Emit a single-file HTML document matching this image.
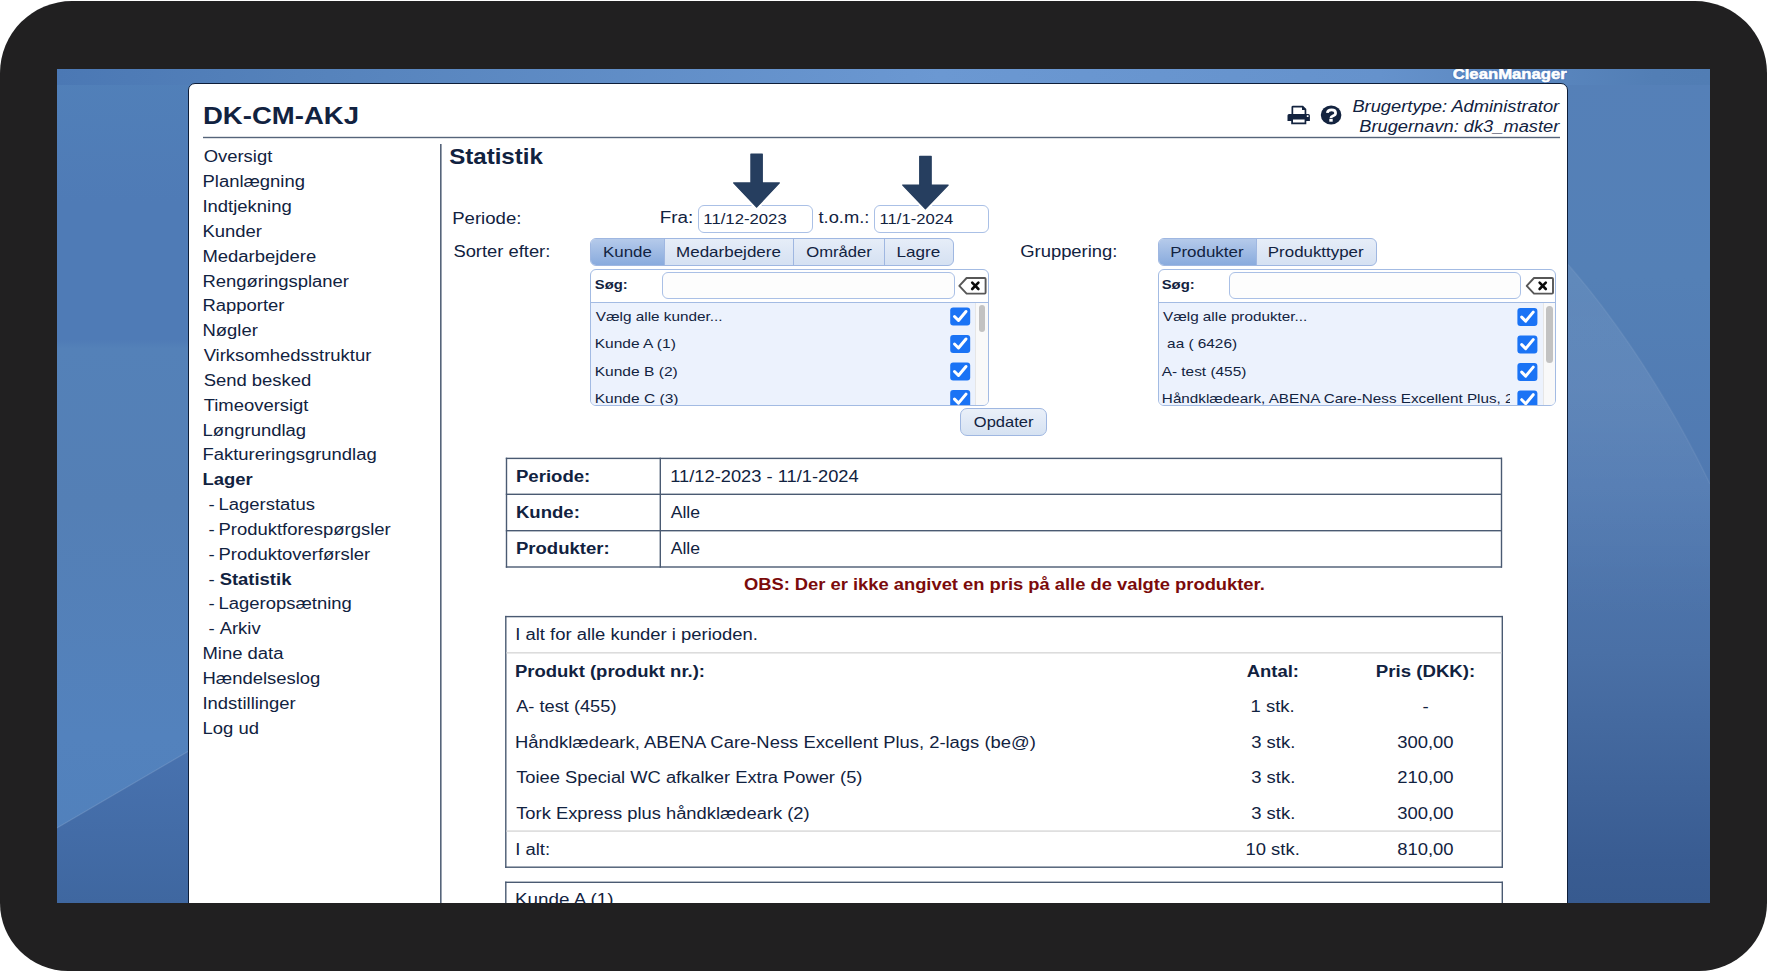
<!DOCTYPE html>
<html><head><meta charset="utf-8">
<style>
html,body{margin:0;padding:0;width:1767px;height:971px;overflow:hidden;background:#fff;font-family:"Liberation Sans",sans-serif;}
.a{position:absolute;box-sizing:border-box;}
#frame{left:0;top:1px;width:1767px;height:970px;background:#212021;border-radius:72px 72px 68px 68px;}
#scr{left:0;top:0;width:1767px;height:971px;clip-path:inset(69px 57px 68px 57px);}
#wall{}
#panel{left:188px;top:83px;width:1380px;height:900px;background:#fff;border:1.5px solid #0d1d38;border-radius:7px 7px 0 0;}
.hl{background:#4d5f7b;}
.inp{border:1px solid #aac0e6;border-radius:6px;background:#fff;}
.tabs{border:1px solid #9fb7e1;border-radius:6px;background:linear-gradient(180deg,#e6edf8,#d5e1f2);overflow:hidden;}
.act{background:linear-gradient(180deg,#b5caea,#89abdd);}
.div{background:#9fb7e1;width:1px;}
.list{border:1px solid #a3bbe3;border-radius:6px;background:#fff;overflow:hidden;}
.rows{background:#ecf2fd;}
.tbl{border:1.5px solid #3f5069;}
.btn{border:1px solid #9fb7e1;border-radius:7px;background:linear-gradient(180deg,#eaf0f9,#d6e2f2);}
</style></head><body>
<div id="frame" class="a"></div>
<div id="scr" class="a">
  <svg id="wall" class="a" style="left:57px;top:69px" width="1653" height="834" viewBox="57 69 1653 834">
    <defs>
      <linearGradient id="gL" x1="0" y1="69" x2="0" y2="903" gradientUnits="userSpaceOnUse">
        <stop offset="0" stop-color="#5180b9"/><stop offset="0.16" stop-color="#4f7bb6"/><stop offset="0.325" stop-color="#4f7bb6"/>
        <stop offset="0.335" stop-color="#5481b8"/><stop offset="0.52" stop-color="#547fb5"/><stop offset="0.8" stop-color="#5382bd"/><stop offset="1" stop-color="#5080bb"/>
      </linearGradient>
      <linearGradient id="gLb" x1="0" y1="750" x2="0" y2="903" gradientUnits="userSpaceOnUse">
        <stop offset="0" stop-color="#4872af"/><stop offset="1" stop-color="#3f67a0"/>
      </linearGradient>
      <linearGradient id="gR" x1="0" y1="69" x2="0" y2="903" gradientUnits="userSpaceOnUse">
        <stop offset="0" stop-color="#5580b8"/><stop offset="0.25" stop-color="#5480b6"/><stop offset="0.5" stop-color="#5079b1"/>
        <stop offset="0.7" stop-color="#4a70a6"/><stop offset="0.95" stop-color="#395c92"/><stop offset="1" stop-color="#375a8f"/>
      </linearGradient>
      <linearGradient id="gRs" x1="0" y1="263" x2="0" y2="620" gradientUnits="userSpaceOnUse">
        <stop offset="0" stop-color="#fff" stop-opacity="0.07"/><stop offset="0.35" stop-color="#fff" stop-opacity="0.08"/><stop offset="1" stop-color="#fff" stop-opacity="0"/>
      </linearGradient>
      <linearGradient id="gT" x1="57" y1="0" x2="1710" y2="0" gradientUnits="userSpaceOnUse">
        <stop offset="0" stop-color="#4b78b4"/><stop offset="0.147" stop-color="#5582bb"/><stop offset="0.534" stop-color="#6b98d2"/>
        <stop offset="0.8" stop-color="#6592cc"/><stop offset="0.966" stop-color="#527eb5"/><stop offset="1" stop-color="#517db4"/>
      </linearGradient>
    </defs>
    <rect x="57" y="69" width="700" height="834" fill="url(#gL)"/>
    <path d="M57 828 L300 686 L300 903 L57 903 Z" fill="url(#gLb)"/>
    <path d="M57 828 L300 686" stroke="#fff" stroke-opacity="0.12" stroke-width="1.2"/>
    <rect x="1000" y="69" width="710" height="834" fill="url(#gR)"/>
    <path d="M1500 200 C1580 260 1660 380 1710 484 L1710 700 L1500 700 Z" fill="url(#gRs)"/>
    <path d="M1500 200 C1580 260 1660 380 1710 484" fill="none" stroke="#fff" stroke-opacity="0.06" stroke-width="1.5"/>
    <rect x="57" y="69" width="1653" height="16" fill="url(#gT)"/>
  </svg>
  <div id="panel" class="a"></div>
  <!-- header line -->
    <!-- nav separator -->
  
  <!-- inputs -->
  <div class="a inp" style="left:698px;top:205px;width:115px;height:28px"></div>
  <div class="a inp" style="left:874px;top:205px;width:115px;height:28px"></div>

  <!-- tabs 1 -->
  <div class="a tabs" style="left:590px;top:238px;width:364px;height:28px">
    <div class="a act" style="left:0;top:0;width:73.5px;height:26px"></div>
    <div class="a div" style="left:73px;top:0;height:26px"></div>
    <div class="a div" style="left:202px;top:0;height:26px"></div>
    <div class="a div" style="left:293px;top:0;height:26px"></div>
  </div>
  <!-- tabs 2 -->
  <div class="a tabs" style="left:1158px;top:238px;width:219px;height:28px">
    <div class="a act" style="left:0;top:0;width:98px;height:26px"></div>
    <div class="a div" style="left:97px;top:0;height:26px"></div>
  </div>

  <!-- list 1 -->
  <div class="a list" style="left:590px;top:269px;width:399px;height:137px">
    <div class="a rows" style="left:0;top:32px;width:397px;height:103px;border-top:1px solid #a3bbe3"></div>
    <div class="a" style="left:384px;top:33px;width:13px;height:102px;background:#f9f9f9;border-left:1px solid #e6e6e6"></div>
    <div class="a" style="left:387.5px;top:35px;width:6.5px;height:26.5px;background:#c2c2c2;border-radius:4px"></div>
  </div>
  <div class="a inp" style="left:662px;top:272px;width:293px;height:27px;background:#fdfdfd"></div>
  <!-- list 2 -->
  <div class="a list" style="left:1158px;top:269px;width:398px;height:137px">
    <div class="a rows" style="left:0;top:32px;width:396px;height:103px;border-top:1px solid #a3bbe3"></div>
    <div class="a" style="left:383.5px;top:33px;width:13px;height:102px;background:#f9f9f9;border-left:1px solid #e6e6e6"></div>
    <div class="a" style="left:387px;top:35.5px;width:6.5px;height:57.5px;background:#c2c2c2;border-radius:4px"></div>
  </div>
  <div class="a inp" style="left:1229px;top:272px;width:292px;height:27px;background:#fdfdfd"></div>

  <!-- button -->
  <div class="a btn" style="left:960px;top:408px;width:87px;height:28px"></div>

  <svg class="a" style="left:0;top:0" width="1767" height="971" viewBox="0 0 1767 971">
    <defs>
      <clipPath id="l1"><rect x="591" y="303" width="384" height="102"/></clipPath>
      <clipPath id="l2"><rect x="1159" y="303" width="383" height="102"/></clipPath>
      <clipPath id="l2t"><rect x="1159" y="303" width="351" height="102"/></clipPath>
    </defs>

    <!-- lines -->
    <g fill="#55647a">
      <rect x="203" y="136.8" width="1357" height="1.4"/>
      <rect x="440" y="144" width="1.6" height="800"/>
    </g>
    <g fill="#4a5a72">
      <!-- info table -->
      <rect x="505.8" y="457.7" width="996.2" height="1.4"/>
      <rect x="505.8" y="493.6" width="996.2" height="1.4"/>
      <rect x="505.8" y="530" width="996.2" height="1.4"/>
      <rect x="505.8" y="566.3" width="996.2" height="1.4"/>
      <rect x="505.8" y="457.7" width="1.4" height="110"/>
      <rect x="1500.8" y="457.7" width="1.4" height="110"/>
      <rect x="659.6" y="457.7" width="1.4" height="110"/>
      <!-- summary -->
      <rect x="505.1" y="615.9" width="997.7" height="1.4"/>
      <rect x="505.1" y="866.5" width="997.7" height="1.4"/>
      <rect x="505.1" y="615.9" width="1.4" height="252"/>
      <rect x="1501.6" y="615.9" width="1.4" height="252"/>
      <rect x="505.1" y="881.6" width="997.7" height="1.4"/>
      <rect x="505.1" y="881.6" width="1.4" height="60"/>
      <rect x="1501.6" y="881.6" width="1.4" height="60"/>
    </g>
    <g fill="#dcdcdc">
      <rect x="506.5" y="652" width="995" height="1.6"/>
      <rect x="506.5" y="830.3" width="995" height="1.6"/>
    </g>
    <!-- arrows -->
    <g stroke-linejoin="round">
      <path d="M750.9 154.1 H762.3 V182.9 H779.4 L756.6 207.2 L733.6 182.9 H750.9 Z" fill="none" stroke="#fff" stroke-width="5"/>
      <path d="M919.7 156.3 H931.2 V185 H948.2 L925.4 208.9 L902.7 185 H919.7 Z" fill="none" stroke="#fff" stroke-width="5"/>
      <path d="M750.9 154.1 H762.3 V182.9 H779.4 L756.6 207.2 L733.6 182.9 H750.9 Z" fill="#263e5f" stroke="#263e5f" stroke-width="1.2"/>
      <path d="M919.7 156.3 H931.2 V185 H948.2 L925.4 208.9 L902.7 185 H919.7 Z" fill="#263e5f" stroke="#263e5f" stroke-width="1.2"/>
    </g>
    <!-- clear icons -->
    <g fill="none" stroke-linejoin="round" stroke-linecap="round">
      <path d="M966.6 278 H984.6 Q985.6 278 985.6 279 V292.6 Q985.6 293.6 984.6 293.6 H966.6 L959.3 285.8 Z" stroke="#575757" stroke-width="1.9"/>
      <path d="M972.2 282.6 L978.4 289 M978.4 282.6 L972.2 289" stroke="#0a0a0a" stroke-width="2.6"/>
      <path d="M1534 278 H1552 Q1553 278 1553 279 V292.6 Q1553 293.6 1552 293.6 H1534 L1526.7 285.8 Z" stroke="#575757" stroke-width="1.9"/>
      <path d="M1539.6 282.6 L1545.8 289 M1545.8 282.6 L1539.6 289" stroke="#0a0a0a" stroke-width="2.6"/>
    </g>
    <!-- checkboxes -->
    <g clip-path="url(#l1)">
      <g id="cb"><rect x="950.2" y="307.4" width="20" height="18" rx="3" fill="#1a73f5"/><path d="M954.5 316.5 L958.5 320.5 L966 311.5" fill="none" stroke="#fff" stroke-width="3" stroke-linecap="round" stroke-linejoin="round"/></g>
      <use href="#cb" y="27.5"/><use href="#cb" y="55"/><use href="#cb" y="82.6"/>
    </g>
    <g clip-path="url(#l2)">
      <use href="#cb" x="567.2" y="0.6"/><use href="#cb" x="567.2" y="28.1"/><use href="#cb" x="567.2" y="55.6"/><use href="#cb" x="567.2" y="83.2"/>
    </g>
    <!-- icons -->
    <g fill="#13233f">
      <path d="M1291.5 115 V107 Q1291.5 105.7 1293 105.7 H1303 L1306.3 109 V115 H1304.6 V110 H1302 V107.4 H1293.2 V115 Z"/>
      <path d="M1287.5 115.5 Q1287.5 114 1289 114 H1308.4 Q1309.9 114 1309.9 115.5 V121 H1306.3 V124.3 H1291.2 V121 H1287.5 Z M1293 119.6 V122.6 H1304.6 V119.6 Z M1306.8 115.2 V117 H1308.5 V115.2 Z" fill-rule="evenodd"/>
      <ellipse cx="1331.1" cy="115" rx="10.3" ry="9.4"/>
    </g>
    <path d="M1327.3 112.9 Q1327.8 109.9 1331.6 109.9 Q1335.6 109.9 1335.6 112.9 Q1335.6 114.8 1333.3 115.8 Q1330.9 116.8 1330.9 118" fill="none" stroke="#fff" stroke-width="2.7"/>
    <rect x="1329.3" y="118.8" width="3.4" height="2.9" fill="#fff"/>
<text x="202.95" y="124.10" font-size="24" textLength="156.09" lengthAdjust="spacingAndGlyphs" fill="#112240" style="font-weight:bold;" xml:space="preserve">DK-CM-AKJ</text>
<text x="1352.40" y="111.70" font-size="16" textLength="206.83" lengthAdjust="spacingAndGlyphs" fill="#112240" style="font-style:italic;" xml:space="preserve">Brugertype: Administrator</text>
<text x="1359.30" y="131.80" font-size="16" textLength="199.93" lengthAdjust="spacingAndGlyphs" fill="#112240" style="font-style:italic;" xml:space="preserve">Brugernavn: dk3_master</text>
<text x="1452.70" y="78.80" font-size="14.5" textLength="114.09" lengthAdjust="spacingAndGlyphs" fill="#3f70b8" style="font-weight:bold;" stroke="#3f70b8" stroke-width="2.2" opacity="0.6" stroke-linejoin="round" xml:space="preserve">CleanManager</text>
<text x="1452.70" y="78.80" font-size="14.5" textLength="114.09" lengthAdjust="spacingAndGlyphs" fill="#ffffff" style="font-weight:bold;" stroke="#ffffff" stroke-width="0.5" xml:space="preserve">CleanManager</text>
<text x="203.65" y="162.30" font-size="16" textLength="68.62" lengthAdjust="spacingAndGlyphs" fill="#112240" style="" xml:space="preserve">Oversigt</text>
<text x="202.50" y="187.14" font-size="16" textLength="102.47" lengthAdjust="spacingAndGlyphs" fill="#112240" style="" xml:space="preserve">Planlægning</text>
<text x="202.50" y="211.98" font-size="16" textLength="89.15" lengthAdjust="spacingAndGlyphs" fill="#112240" style="" xml:space="preserve">Indtjekning</text>
<text x="202.50" y="236.82" font-size="16" textLength="59.44" lengthAdjust="spacingAndGlyphs" fill="#112240" style="" xml:space="preserve">Kunder</text>
<text x="202.50" y="261.66" font-size="16" textLength="113.73" lengthAdjust="spacingAndGlyphs" fill="#112240" style="" xml:space="preserve">Medarbejdere</text>
<text x="202.50" y="286.50" font-size="16" textLength="146.51" lengthAdjust="spacingAndGlyphs" fill="#112240" style="" xml:space="preserve">Rengøringsplaner</text>
<text x="202.50" y="311.34" font-size="16" textLength="81.96" lengthAdjust="spacingAndGlyphs" fill="#112240" style="" xml:space="preserve">Rapporter</text>
<text x="202.50" y="336.18" font-size="16" textLength="55.30" lengthAdjust="spacingAndGlyphs" fill="#112240" style="" xml:space="preserve">Nøgler</text>
<text x="203.65" y="361.02" font-size="16" textLength="167.65" lengthAdjust="spacingAndGlyphs" fill="#112240" style="" xml:space="preserve">Virksomhedsstruktur</text>
<text x="203.65" y="385.86" font-size="16" textLength="107.60" lengthAdjust="spacingAndGlyphs" fill="#112240" style="" xml:space="preserve">Send besked</text>
<text x="203.65" y="410.70" font-size="16" textLength="104.81" lengthAdjust="spacingAndGlyphs" fill="#112240" style="" xml:space="preserve">Timeoversigt</text>
<text x="202.50" y="435.54" font-size="16" textLength="103.50" lengthAdjust="spacingAndGlyphs" fill="#112240" style="" xml:space="preserve">Løngrundlag</text>
<text x="202.50" y="460.38" font-size="16" textLength="174.18" lengthAdjust="spacingAndGlyphs" fill="#112240" style="" xml:space="preserve">Faktureringsgrundlag</text>
<text x="202.50" y="485.22" font-size="16" textLength="50.19" lengthAdjust="spacingAndGlyphs" fill="#112240" style="font-weight:bold;" xml:space="preserve">Lager</text>
<text x="208.40" y="510.06" font-size="16" textLength="6.14" lengthAdjust="spacingAndGlyphs" fill="#112240" style="" xml:space="preserve">-</text>
<text x="218.55" y="510.06" font-size="16" textLength="96.32" lengthAdjust="spacingAndGlyphs" fill="#112240" style="" xml:space="preserve">Lagerstatus</text>
<text x="208.40" y="534.90" font-size="16" textLength="6.14" lengthAdjust="spacingAndGlyphs" fill="#112240" style="" xml:space="preserve">-</text>
<text x="218.55" y="534.90" font-size="16" textLength="172.10" lengthAdjust="spacingAndGlyphs" fill="#112240" style="" xml:space="preserve">Produktforespørgsler</text>
<text x="208.40" y="559.74" font-size="16" textLength="6.14" lengthAdjust="spacingAndGlyphs" fill="#112240" style="" xml:space="preserve">-</text>
<text x="218.55" y="559.74" font-size="16" textLength="151.60" lengthAdjust="spacingAndGlyphs" fill="#112240" style="" xml:space="preserve">Produktoverførsler</text>
<text x="208.40" y="584.58" font-size="16" textLength="6.14" lengthAdjust="spacingAndGlyphs" fill="#112240" style="" xml:space="preserve">-</text>
<text x="219.70" y="584.58" font-size="16" textLength="71.70" lengthAdjust="spacingAndGlyphs" fill="#112240" style="font-weight:bold;" xml:space="preserve">Statistik</text>
<text x="208.40" y="609.42" font-size="16" textLength="6.14" lengthAdjust="spacingAndGlyphs" fill="#112240" style="" xml:space="preserve">-</text>
<text x="218.55" y="609.42" font-size="16" textLength="133.22" lengthAdjust="spacingAndGlyphs" fill="#112240" style="" xml:space="preserve">Lageropsætning</text>
<text x="208.40" y="634.26" font-size="16" textLength="6.14" lengthAdjust="spacingAndGlyphs" fill="#112240" style="" xml:space="preserve">-</text>
<text x="219.70" y="634.26" font-size="16" textLength="40.96" lengthAdjust="spacingAndGlyphs" fill="#112240" style="" xml:space="preserve">Arkiv</text>
<text x="202.50" y="659.10" font-size="16" textLength="80.95" lengthAdjust="spacingAndGlyphs" fill="#112240" style="" xml:space="preserve">Mine data</text>
<text x="202.50" y="683.94" font-size="16" textLength="117.83" lengthAdjust="spacingAndGlyphs" fill="#112240" style="" xml:space="preserve">Hændelseslog</text>
<text x="202.50" y="708.78" font-size="16" textLength="93.23" lengthAdjust="spacingAndGlyphs" fill="#112240" style="" xml:space="preserve">Indstillinger</text>
<text x="202.50" y="733.62" font-size="16" textLength="56.38" lengthAdjust="spacingAndGlyphs" fill="#112240" style="" xml:space="preserve">Log ud</text>
<text x="449.20" y="164.10" font-size="22" textLength="93.66" lengthAdjust="spacingAndGlyphs" fill="#112240" style="font-weight:bold;" xml:space="preserve">Statistik</text>
<text x="452.24" y="224.30" font-size="16" textLength="69.14" lengthAdjust="spacingAndGlyphs" fill="#112240" style="" xml:space="preserve">Periode:</text>
<text x="659.72" y="223.20" font-size="16" textLength="33.48" lengthAdjust="spacingAndGlyphs" fill="#112240" style="" xml:space="preserve">Fra:</text>
<text x="703.35" y="223.80" font-size="14.5" textLength="83.33" lengthAdjust="spacingAndGlyphs" fill="#112240" style="" xml:space="preserve">11/12-2023</text>
<text x="818.50" y="223.20" font-size="16" textLength="50.85" lengthAdjust="spacingAndGlyphs" fill="#112240" style="" xml:space="preserve">t.o.m.:</text>
<text x="879.55" y="223.80" font-size="14.5" textLength="73.72" lengthAdjust="spacingAndGlyphs" fill="#112240" style="" xml:space="preserve">11/1-2024</text>
<text x="453.40" y="257.20" font-size="16" textLength="96.96" lengthAdjust="spacingAndGlyphs" fill="#112240" style="" xml:space="preserve">Sorter efter:</text>
<text x="602.97" y="257.20" font-size="15" textLength="48.91" lengthAdjust="spacingAndGlyphs" fill="#112240" style="" xml:space="preserve">Kunde</text>
<text x="676.07" y="257.20" font-size="15" textLength="104.82" lengthAdjust="spacingAndGlyphs" fill="#112240" style="" xml:space="preserve">Medarbejdere</text>
<text x="806.20" y="257.20" font-size="15" textLength="65.69" lengthAdjust="spacingAndGlyphs" fill="#112240" style="" xml:space="preserve">Områder</text>
<text x="896.46" y="257.20" font-size="15" textLength="43.73" lengthAdjust="spacingAndGlyphs" fill="#112240" style="" xml:space="preserve">Lagre</text>
<text x="1020.20" y="257.20" font-size="16" textLength="97.26" lengthAdjust="spacingAndGlyphs" fill="#112240" style="" xml:space="preserve">Gruppering:</text>
<text x="1170.17" y="257.20" font-size="15" textLength="73.42" lengthAdjust="spacingAndGlyphs" fill="#112240" style="" xml:space="preserve">Produkter</text>
<text x="1267.87" y="257.20" font-size="15" textLength="95.72" lengthAdjust="spacingAndGlyphs" fill="#112240" style="" xml:space="preserve">Produkttyper</text>
<text x="594.80" y="289.40" font-size="13" textLength="32.87" lengthAdjust="spacingAndGlyphs" fill="#112240" style="font-weight:bold;" xml:space="preserve">Søg:</text>
<text x="1161.70" y="289.40" font-size="13" textLength="33.07" lengthAdjust="spacingAndGlyphs" fill="#112240" style="font-weight:bold;" xml:space="preserve">Søg:</text>
<text x="595.80" y="320.50" font-size="13.5" textLength="126.75" lengthAdjust="spacingAndGlyphs" fill="#112240" style="" clip-path="url(#l1)" xml:space="preserve">Vælg alle kunder...</text>
<text x="594.67" y="348.30" font-size="13.5" textLength="81.19" lengthAdjust="spacingAndGlyphs" fill="#112240" style="" clip-path="url(#l1)" xml:space="preserve">Kunde A (1)</text>
<text x="594.65" y="375.60" font-size="13.5" textLength="83.13" lengthAdjust="spacingAndGlyphs" fill="#112240" style="" clip-path="url(#l1)" xml:space="preserve">Kunde B (2)</text>
<text x="594.65" y="403.10" font-size="13.5" textLength="83.85" lengthAdjust="spacingAndGlyphs" fill="#112240" style="" clip-path="url(#l1)" xml:space="preserve">Kunde C (3)</text>
<text x="1163.00" y="320.60" font-size="13.5" textLength="144.25" lengthAdjust="spacingAndGlyphs" fill="#112240" style="" clip-path="url(#l2)" xml:space="preserve">Vælg alle produkter...</text>
<text x="1167.10" y="348.20" font-size="13.5" textLength="69.96" lengthAdjust="spacingAndGlyphs" fill="#112240" style="" clip-path="url(#l2)" xml:space="preserve">aa ( 6426)</text>
<text x="1161.70" y="375.70" font-size="13.5" textLength="84.66" lengthAdjust="spacingAndGlyphs" fill="#112240" style="" clip-path="url(#l2)" xml:space="preserve">A- test (455)</text>
<text x="1161.88" y="403.20" font-size="13.5" textLength="431.55" lengthAdjust="spacingAndGlyphs" fill="#112240" style="" clip-path="url(#l2t)" xml:space="preserve">Håndklædeark, ABENA Care-Ness Excellent Plus, 2-lags (be@)</text>
<text x="973.80" y="427.00" font-size="14.5" textLength="59.61" lengthAdjust="spacingAndGlyphs" fill="#112240" style="" xml:space="preserve">Opdater</text>
<text x="515.94" y="481.50" font-size="16" textLength="74.30" lengthAdjust="spacingAndGlyphs" fill="#112240" style="font-weight:bold;" xml:space="preserve">Periode:</text>
<text x="515.94" y="517.60" font-size="16" textLength="63.90" lengthAdjust="spacingAndGlyphs" fill="#112240" style="font-weight:bold;" xml:space="preserve">Kunde:</text>
<text x="515.94" y="553.70" font-size="16" textLength="93.70" lengthAdjust="spacingAndGlyphs" fill="#112240" style="font-weight:bold;" xml:space="preserve">Produkter:</text>
<text x="670.26" y="481.50" font-size="16" textLength="188.43" lengthAdjust="spacingAndGlyphs" fill="#112240" style="" xml:space="preserve">11/12-2023 - 11/1-2024</text>
<text x="670.70" y="517.60" font-size="16" textLength="29.39" lengthAdjust="spacingAndGlyphs" fill="#112240" style="" xml:space="preserve">Alle</text>
<text x="670.70" y="553.70" font-size="16" textLength="29.39" lengthAdjust="spacingAndGlyphs" fill="#112240" style="" xml:space="preserve">Alle</text>
<text x="743.90" y="590.00" font-size="16" textLength="520.91" lengthAdjust="spacingAndGlyphs" fill="#7b0b0b" style="font-weight:bold;" xml:space="preserve">OBS: Der er ikke angivet en pris på alle de valgte produkter.</text>
<text x="515.25" y="640.40" font-size="16" textLength="242.61" lengthAdjust="spacingAndGlyphs" fill="#112240" style="" xml:space="preserve">I alt for alle kunder i perioden.</text>
<text x="514.94" y="676.70" font-size="16" textLength="190.09" lengthAdjust="spacingAndGlyphs" fill="#112240" style="font-weight:bold;" xml:space="preserve">Produkt (produkt nr.):</text>
<text x="516.20" y="712.10" font-size="16" textLength="100.27" lengthAdjust="spacingAndGlyphs" fill="#112240" style="" xml:space="preserve">A- test (455)</text>
<text x="515.05" y="747.60" font-size="16" textLength="520.72" lengthAdjust="spacingAndGlyphs" fill="#112240" style="" xml:space="preserve">Håndklædeark, ABENA Care-Ness Excellent Plus, 2-lags (be@)</text>
<text x="516.20" y="783.40" font-size="16" textLength="346.28" lengthAdjust="spacingAndGlyphs" fill="#112240" style="" xml:space="preserve">Toiee Special WC afkalker Extra Power (5)</text>
<text x="516.20" y="818.50" font-size="16" textLength="293.48" lengthAdjust="spacingAndGlyphs" fill="#112240" style="" xml:space="preserve">Tork Express plus håndklædeark (2)</text>
<text x="515.25" y="854.80" font-size="16" textLength="34.83" lengthAdjust="spacingAndGlyphs" fill="#112240" style="" xml:space="preserve">I alt:</text>
<text x="1246.70" y="677.20" font-size="16" textLength="52.33" lengthAdjust="spacingAndGlyphs" fill="#112240" style="font-weight:bold;" xml:space="preserve">Antal:</text>
<text x="1375.84" y="677.20" font-size="16" textLength="99.41" lengthAdjust="spacingAndGlyphs" fill="#112240" style="font-weight:bold;" xml:space="preserve">Pris (DKK):</text>
<text x="1250.63" y="712.30" font-size="16" textLength="44.05" lengthAdjust="spacingAndGlyphs" fill="#112240" style="" xml:space="preserve">1 stk.</text>
<text x="1422.52" y="712.30" font-size="16" textLength="6.14" lengthAdjust="spacingAndGlyphs" fill="#112240" style="" xml:space="preserve">-</text>
<text x="1251.21" y="747.90" font-size="16" textLength="44.05" lengthAdjust="spacingAndGlyphs" fill="#112240" style="" xml:space="preserve">3 stk.</text>
<text x="1397.15" y="747.90" font-size="16" textLength="56.38" lengthAdjust="spacingAndGlyphs" fill="#112240" style="" xml:space="preserve">300,00</text>
<text x="1251.21" y="783.20" font-size="16" textLength="44.05" lengthAdjust="spacingAndGlyphs" fill="#112240" style="" xml:space="preserve">3 stk.</text>
<text x="1397.15" y="783.20" font-size="16" textLength="56.38" lengthAdjust="spacingAndGlyphs" fill="#112240" style="" xml:space="preserve">210,00</text>
<text x="1251.21" y="818.80" font-size="16" textLength="44.05" lengthAdjust="spacingAndGlyphs" fill="#112240" style="" xml:space="preserve">3 stk.</text>
<text x="1397.15" y="818.80" font-size="16" textLength="56.38" lengthAdjust="spacingAndGlyphs" fill="#112240" style="" xml:space="preserve">300,00</text>
<text x="1245.51" y="855.00" font-size="16" textLength="54.30" lengthAdjust="spacingAndGlyphs" fill="#112240" style="" xml:space="preserve">10 stk.</text>
<text x="1397.15" y="855.00" font-size="16" textLength="56.38" lengthAdjust="spacingAndGlyphs" fill="#112240" style="" xml:space="preserve">810,00</text>
<text x="515.05" y="905.00" font-size="16" textLength="98.36" lengthAdjust="spacingAndGlyphs" fill="#112240" style="" xml:space="preserve">Kunde A (1)</text>
  </svg>
</div>
</body></html>
